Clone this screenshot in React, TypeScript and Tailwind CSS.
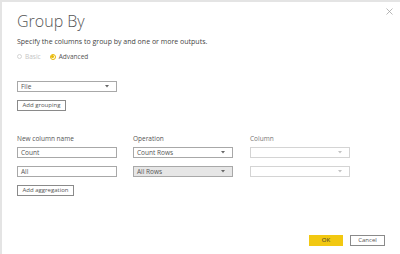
import React from "react";

const font = { fontFamily: '"Open Sans", "Noto Sans", Arial, sans-serif' };

function Caret({ light }: { light?: boolean }) {
  return (
    <svg width="4" height="3" viewBox="0 0 4 3" className="ml-auto">
      <path d="M0 0 L4 0 L2 2.5 Z" fill={light ? "#c4c4c4" : "#666"} />
    </svg>
  );
}

function Select({ value, shaded, light }: { value?: string; shaded?: boolean; light?: boolean }) {
  return (
    <div
      className={`flex h-[11px] w-[100px] items-center border px-[3px] pr-[7px] text-[6.5px] ${
        light ? "border-[#d4d4d4]" : "border-[#a8a8a8]"
      } ${shaded ? "bg-[#e6e6e6]" : "bg-white"} text-[#555]`}
    >
      <span>{value}</span>
      <Caret light={light} />
    </div>
  );
}

function Input({ value }: { value: string }) {
  return (
    <div className="flex h-[11px] w-[100px] items-center border border-[#a8a8a8] bg-white px-[3px] text-[6.5px] text-[#555]">
      {value}
    </div>
  );
}

function Btn({ label, w }: { label: string; w: string }) {
  return (
    <div className={`flex h-[11px] ${w} items-center justify-center border border-[#8a8a8a] bg-white text-[6px] text-[#555]`}>
      {label}
    </div>
  );
}

export default function App() {
  return (
    <div style={font} className="relative h-[254px] w-[400px] overflow-hidden border-l-2 border-t-2 border-[#e4e4e4] bg-white">
      {/* close */}
      <svg width="7" height="7" viewBox="0 0 7 7" className="absolute right-[7px] top-[6px]">
        <path d="M0.5 0.5 L6.5 6.5 M6.5 0.5 L0.5 6.5" stroke="#999" strokeWidth="0.7" />
      </svg>

      <div className="flex flex-col pl-[15px] pt-[9px]">
        <div className="text-[16px] font-light leading-[20px] text-[#555]">Group By</div>
        <div className="mt-[6px] text-[7px] leading-[10px] text-[#444]">
          Specify the columns to group by and one or more outputs.
        </div>

        {/* radios */}
        <div className="mt-[5px] flex items-center text-[6.5px] leading-[9px]">
          <div className="flex items-center gap-[3px] text-[#c4c4c4]">
            <span className="h-[5px] w-[5px] rounded-full border border-[#d4d4d4]" />
            <span>Basic</span>
          </div>
          <div className="ml-[9px] flex items-center gap-[3px] text-[#555]">
            <span className="flex h-[6px] w-[6px] items-center justify-center rounded-full border border-[#e8b800]">
              <span className="h-[3px] w-[3px] rounded-full bg-[#e8b800]" />
            </span>
            <span>Advanced</span>
          </div>
        </div>

        <div className="mt-[20px]">
          <Select value="File" />
        </div>
        <div className="mt-[8px]">
          <Btn label="Add grouping" w="w-[49px]" />
        </div>

        {/* aggregation table */}
        <div className="mt-[23px] grid grid-cols-[116px_117px_100px] gap-y-[8px] text-[6.5px] text-[#555]">
          <div className="-mb-[4px] leading-[9px]">New column name</div>
          <div className="-mb-[4px] leading-[9px]">Operation</div>
          <div className="-mb-[4px] leading-[9px] text-[#777]">Column</div>

          <Input value="Count" />
          <Select value="Count Rows" />
          <Select light />

          <Input value="All" />
          <Select value="All Rows" shaded />
          <Select light />
        </div>

        <div className="mt-[8px]">
          <Btn label="Add aggregation" w="w-[57px]" />
        </div>
      </div>

      {/* footer */}
      <div className="absolute bottom-[8px] right-[15px] flex gap-[7px]">
        <div className="flex h-[11px] w-[34px] items-center justify-center bg-[#f2c811] text-[6px] text-[#333]">OK</div>
        <div className="flex h-[11px] w-[35px] items-center justify-center border border-[#8a8a8a] bg-white text-[6px] text-[#555]">Cancel</div>
      </div>
    </div>
  );
}
